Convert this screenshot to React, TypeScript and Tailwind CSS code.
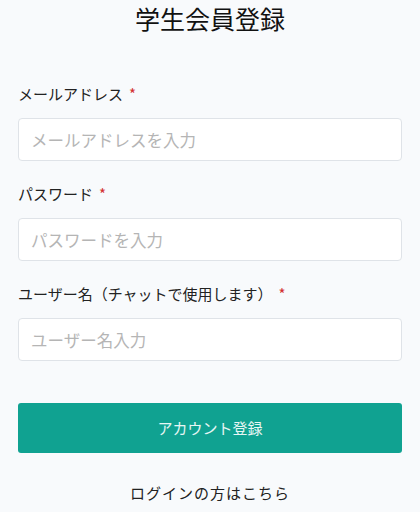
const font = { fontFamily: '"Noto Sans CJK JP", "Noto Sans", sans-serif' };

const Field = ({ label, placeholder, type = 'text' }: { label: string; placeholder: string; type?: string }) => (
  <div className="flex flex-col">
    <label className="h-[24px] text-[15px] leading-[24px] text-[#222]">
      {label}
      <span className="ml-[6px] text-[#d32f2f]">*</span>
    </label>
    <input
      type={type}
      placeholder={placeholder}
      className="mt-[12px] h-[43px] w-full rounded-[4px] border border-[#dfe3e8] bg-white px-[12px] text-[16.5px] text-[#333] placeholder:text-[#b5b5b5] outline-none"
    />
  </div>
);

const App = () => {
  return (
    <div className="min-h-screen w-full bg-[#f8fafc]" style={font}>
      <div className="px-[18px]">
        <h1 className="pt-[1px] text-center text-[25px] leading-[34px] text-[#111]">学生会員登録</h1>
        <div className="mt-[47px] flex flex-col gap-[21px]">
          <Field label="メールアドレス" placeholder="メールアドレスを入力" type="email" />
          <Field label="パスワード" placeholder="パスワードを入力" type="password" />
          <Field label="ユーザー名（チャットで使用します）" placeholder="ユーザー名入力" />
        </div>
        <button className="mt-[42px] h-[50px] w-full rounded-[3px] bg-[#10a291] text-[15px] text-white/90">
          アカウント登録
        </button>
        <p className="mt-[28px] text-center text-[15px] leading-[24px] tracking-[1px] text-[#222]">ログインの方はこちら</p>
      </div>
    </div>
  );
};

export default App;
